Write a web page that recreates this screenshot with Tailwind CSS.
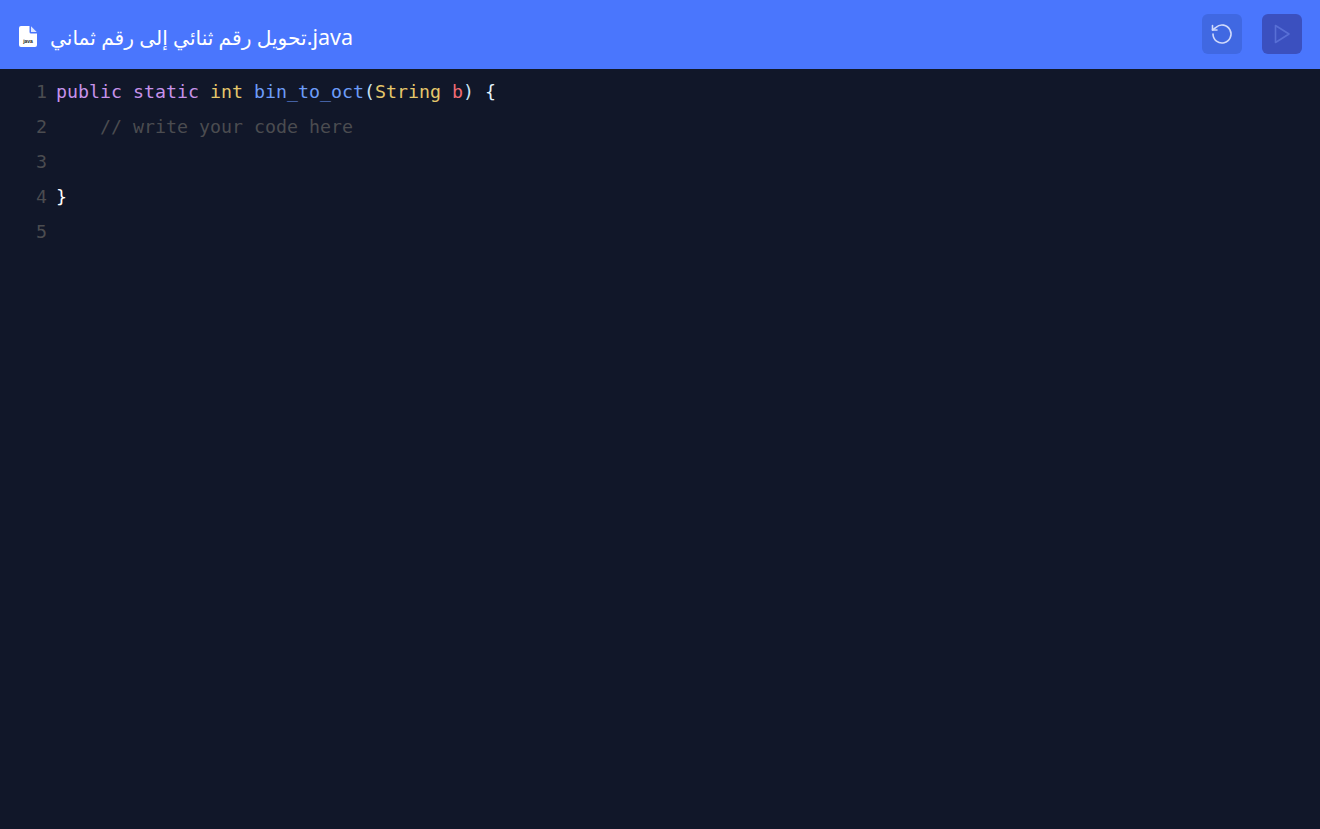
<!DOCTYPE html>
<html lang="en">
<head>
  <meta charset="UTF-8" />
  <title>bin_to_oct</title>
  <script src="https://cdn.jsdelivr.net/npm/@tailwindcss/browser@4"></script>
</head>
<body class="h-[829px] w-[1320px] overflow-hidden bg-[#111729]">

  <header class="flex h-[69px] items-center justify-between bg-[#4a76fd] pb-px pl-[19px] pr-[18px]">
    <div class="mt-[5px] flex items-center gap-[13px]">
      <svg width="18" height="21" viewBox="0 0 18 21">
        <path d="M2 0H10.5V6a1.5 1.5 0 0 0 1.5 1.5H18V19a2 2 0 0 1-2 2H2a2 2 0 0 1-2-2V2a2 2 0 0 1 2-2Z" fill="#fff"/>
        <path d="M12 0.3 17.7 6H12Z" fill="#dfe7ff"/>
        <text x="9" y="17" text-anchor="middle" font-family="Liberation Sans, sans-serif" font-size="5" font-weight="700" fill="#222">java</text>
      </svg>
      <span dir="ltr" class="font-['Noto_Sans','DejaVu_Sans',sans-serif] text-[20.2px] leading-[28px] text-white">تحويل رقم ثنائي إلى رقم ثماني<span class="text-[21.5px]">.java</span></span>
    </div>
    <div class="flex items-center gap-5">
      <button class="flex h-10 w-10 items-center justify-center rounded-md bg-[#4068e2]">
        <svg width="24" height="24" viewBox="0 0 24 24" fill="none" stroke="#cfd9fb" stroke-width="1.6" stroke-linecap="round" stroke-linejoin="round">
          <path d="M3 12a9 9 0 1 0 3-6.7L2.5 8"/>
          <path d="M2.5 3.5V8H7"/>
        </svg>
      </button>
      <button class="flex h-10 w-10 items-center justify-center rounded-md bg-[#3b50bf]">
        <svg width="24" height="24" viewBox="0 0 24 24" fill="none" stroke="#586fd6" stroke-width="1.6" stroke-linejoin="round">
          <path d="M5.5 3.5v17L19 12Z"/>
        </svg>
      </button>
    </div>
  </header>

  <main class="flex pt-[5px] font-['DejaVu_Sans_Mono',monospace] text-[18.27px] leading-[35px]">
    <div class="w-[47px] text-right text-[#4b4c50]">
      <div>1</div>
      <div>2</div>
      <div>3</div>
      <div>4</div>
      <div>5</div>
    </div>
    <div class="ml-[9px] text-white">
      <div class="whitespace-pre"><span class="text-[#c792ea]">public static</span> <span class="text-[#e5c76b]">int</span> <span class="text-[#6d9cf8]">bin_to_oct</span><span class="text-[#c9e4f5]">(</span><span class="text-[#e5c76b]">String</span> <span class="text-[#ef6b73]">b</span><span class="text-[#c9e4f5]">)</span> <span class="text-[#e3f2fd]">{</span></div>
      <div class="whitespace-pre text-[#4b4c50]">    // write your code here</div>
      <div>&nbsp;</div>
      <div>}</div>
      <div>&nbsp;</div>
    </div>
  </main>

</body>
</html>
